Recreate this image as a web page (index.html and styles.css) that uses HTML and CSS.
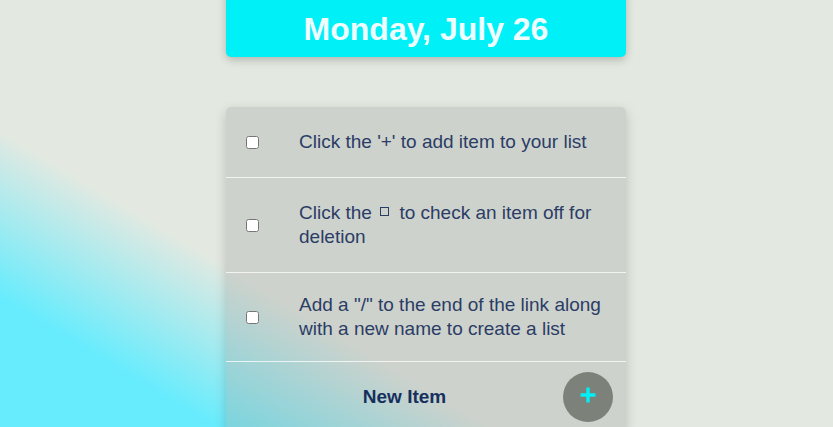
FILE: index.html
```html
<!DOCTYPE html>
<html lang="en">
<head>
<meta charset="utf-8">
<title>To-Do List</title>
<link rel="stylesheet" href="styles.css">
</head>
<body>
<main class="page">
  <header class="heading">
    <h1 class="heading-title">Monday, July 26</h1>
  </header>
  <section class="card">
    <form class="item item--tall">
      <input class="item-check" type="checkbox">
      <p class="item-text">Click the '+' to add item to your list</p>
    </form>
    <form class="item item--tall">
      <input class="item-check" type="checkbox">
      <p class="item-text">Click the <span class="mini-box"></span> to check an item off for deletion</p>
    </form>
    <form class="item">
      <input class="item-check" type="checkbox">
      <p class="item-text">Add a "/" to the end of the link along with a new name to create a list</p>
    </form>
    <form class="item item--new">
      <span class="new-label">New Item</span>
      <button class="add-btn" type="button" aria-label="Add">
        <svg class="add-icon" width="18" height="18" viewBox="0 0 18 18"><path d="M9 1.5V16.5M1.5 9H16.5" stroke="#00f0f8" stroke-width="3.4" fill="none"/></svg>
      </button>
    </form>
  </section>
</main>
</body>
</html>
```

FILE: styles.css
```css
html {
  min-height: 100%;
  background: #e3e9e1 linear-gradient(31deg, #67ecfd 0%, #67ecfd 14%, #e3e9e1 32%, #e3e9e1 100%) fixed;
}

body {
  margin: 0;
  padding-left: 19px;
  font-family: "Liberation Sans", Arial, sans-serif;
}

.page {
  width: 400px;
  margin: 0 auto;
}

.heading {
  margin-top: -10px;
  height: 67px;
  padding-top: 10px;
  box-sizing: border-box;
  background: #00f0f8;
  border-radius: 5px;
  box-shadow: 0 3px 8px rgba(0, 0, 0, 0.22);
  display: flex;
  align-items: center;
  justify-content: center;
}

.heading-title {
  margin: 0;
  font-size: 32px;
  font-weight: bold;
  color: #f0fdff;
  line-height: 1;
}

.card {
  margin-top: 50px;
  background: rgba(160, 160, 155, 0.3);
  border-radius: 5px;
  box-shadow: 0 4px 12px rgba(0, 0, 0, 0.18);
  overflow: hidden;
}

.item {
  display: flex;
  align-items: center;
  margin: 0;
  padding: 20px;
  border-bottom: 1px solid rgba(255, 255, 255, 0.75);
}

.item--tall {
  padding-top: 23px;
  padding-bottom: 23px;
}

.item-check {
  width: 13px;
  height: 13px;
  margin: 0 40px 0 0;
  flex: none;
}

.item-text {
  margin: 0;
  font-size: 19px;
  line-height: 24px;
  color: #2b3d66;
}

.mini-box {
  display: inline-block;
  width: 7px;
  height: 7px;
  border: 1.3px solid #2b3d66;
  margin: 0 5px 0 3px;
  vertical-align: 3px;
}

.item--new {
  padding: 10px 13px 10px 20px;
  border-bottom: none;
}

.new-label {
  flex: 1;
  text-align: center;
  font-size: 19px;
  font-weight: bold;
  color: #16305e;
}

.add-btn {
  width: 50px;
  height: 50px;
  border: none;
  border-radius: 50%;
  background: #7c817a;
  padding: 0;
  display: flex;
  align-items: center;
  justify-content: center;
  flex: none;
}

.add-icon {
  display: block;
  margin-top: -5px;
}
```
